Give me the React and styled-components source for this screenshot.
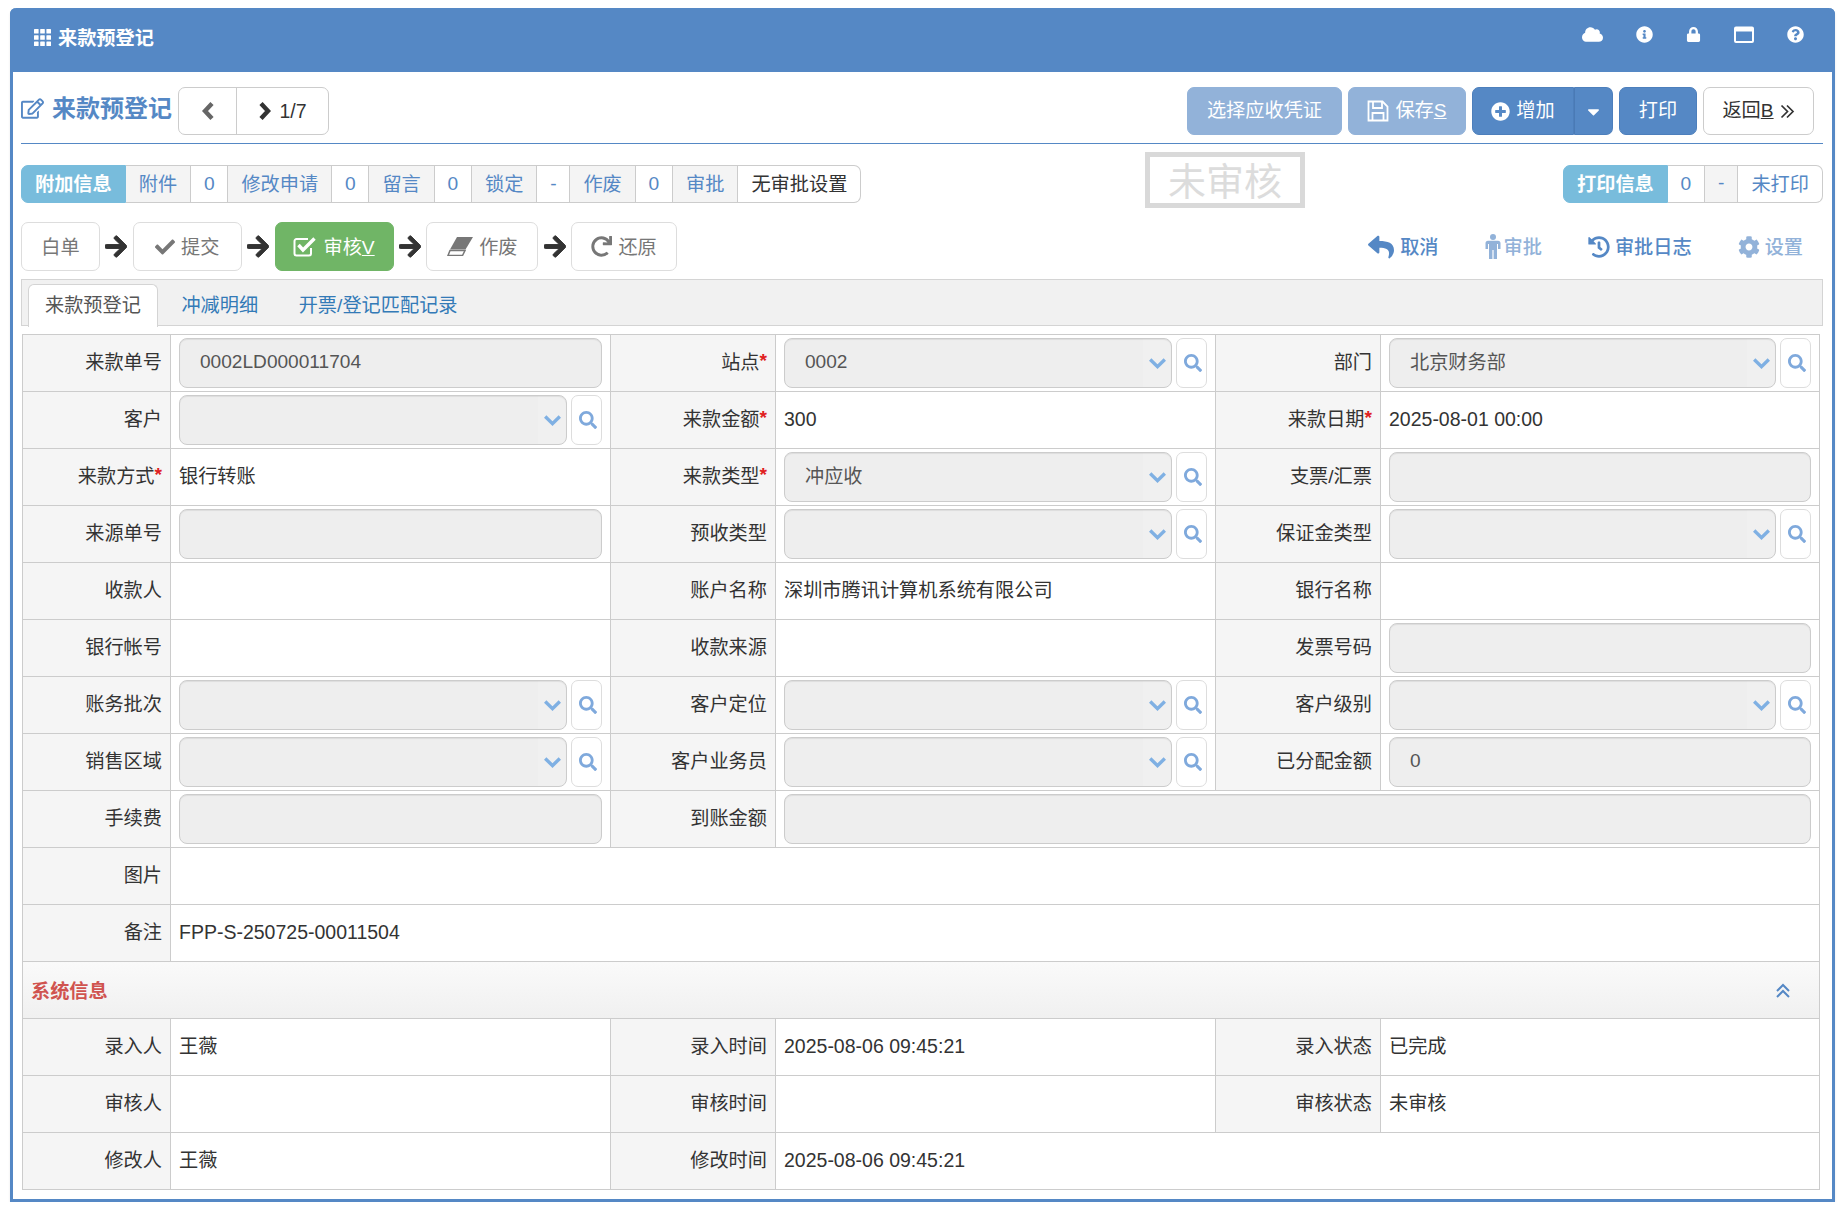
import React from "react";
import styled, { createGlobalStyle } from "styled-components";
import {
  FaCloud, FaInfoCircle, FaLock, FaQuestionCircle, FaRegEdit, FaPlusCircle, FaCaretDown, FaArrowRight,
  FaCheck, FaRedo, FaReply, FaHistory, FaCog, FaSearch,
} from "react-icons/fa";

const BLUE = "#5588c5";
const BLUE_LIGHT = "#92b2d9";

const GlobalStyle = createGlobalStyle`
  html, body {
    margin: 0;
    padding: 0;
    background: #fff;
  }
  body {
    font-family: "Liberation Sans", "Noto Sans CJK SC", sans-serif;
    font-size: 19.2px;
    color: #333;
  }
  * {
    box-sizing: border-box;
  }
`;

const Page = styled.div`
  padding: 8px 13px 0 10px;
`;

const Panel = styled.div`
  border: 3px solid ${BLUE};
  border-top: 0;
  border-radius: 6px 6px 0 0;
  height: 1194px;
  box-shadow: 0 2px 3px rgba(0, 0, 0, 0.08);
`;

const Header = styled.header`
  height: 64px;
  margin: 0 -3px;
  padding: 0 31px 6px 24px;
  background: ${BLUE};
  border-radius: 6px 6px 0 0;
  color: #fff;
  display: flex;
  align-items: center;
  justify-content: space-between;
`;

const HeaderTitle = styled.div`
  display: flex;
  align-items: center;
  gap: 7px;
  font-weight: bold;
`;

const HeaderIcons = styled.div`
  display: flex;
  align-items: center;
  gap: 33px;
  font-size: 17px;
  margin-bottom: 5px;
`;

const Txt = styled.span`
  display: inline-block;
  margin-bottom: 4px;
`;

const Body = styled.div`
  padding: 0 9px 0 8px;
`;

const TitleRow = styled.div`
  display: flex;
  align-items: center;
  justify-content: space-between;
  padding: 15px 9px 8px 0;
  border-bottom: 1px solid ${BLUE};
`;

const TitleLeft = styled.div`
  display: flex;
  align-items: center;
  gap: 6px;
`;

const PageTitle = styled.h1`
  margin: 0;
  padding-bottom: 5px;
  display: flex;
  align-items: center;
  gap: 8px;
  font-size: 24px;
  font-weight: bold;
  color: ${BLUE};
`;

const Pager = styled.div`
  display: flex;
  height: 48px;
  border: 1px solid #ccc;
  border-radius: 7px;
  font-size: 19.5px;
`;

const PagerCell = styled.div`
  display: flex;
  align-items: center;
  justify-content: center;
  gap: 7px;
  width: ${(p) => p.$width}px;
  color: ${(p) => p.$color || "#333"};
  & + & {
    border-left: 1px solid #ccc;
  }
`;

const ButtonBar = styled.div`
  display: flex;
  gap: 6px;
`;

const Button = styled.button`
  width: ${(p) => p.$width}px;
  height: 48px;
  padding: 0;
  display: flex;
  align-items: center;
  justify-content: center;
  gap: 6px;
  font: inherit;
  border-radius: 7px;
  border: 1px solid ${(p) => (p.$kind === "primary" ? "#4d7fbc" : p.$kind === "muted" ? BLUE_LIGHT : "#ccc")};
  background: ${(p) => (p.$kind === "primary" ? BLUE : p.$kind === "muted" ? BLUE_LIGHT : "#fff")};
  color: ${(p) => (p.$kind === "default" ? "#333" : "#fff")};
`;

const SplitButton = styled.div`
  display: flex;
  ${Button}:first-child {
    border-radius: 7px 0 0 7px;
  }
  ${Button}:last-child {
    border-radius: 0 7px 7px 0;
    border-left: 1px solid #4a7ab5;
  }
`;

const TagRow = styled.div`
  position: relative;
  display: flex;
  justify-content: space-between;
  margin-top: 21px;
`;

const TagGroup = styled.div`
  display: flex;
  height: 38px;
`;

const Tag = styled.div`
  display: flex;
  align-items: center;
  padding: 0 ${(p) => (p.$kind ? 13 : 12.8)}px ${(p) => (p.$kind ? 2 : 0)}px;
  border: 1px solid #ccc;
  border-left-width: 0;
  white-space: nowrap;
  background: ${(p) => (p.$kind === "label" ? "#f4f4f4" : "#fff")};
  color: ${(p) => (p.$kind === "plain" ? "#333" : BLUE)};

  &:first-child {
    border-left-width: 1px;
    border-radius: 7px 0 0 7px;
  }
  &:last-child {
    border-radius: 0 7px 7px 0;
  }
`;

const TagHead = styled(Tag)`
  padding: 0 13px 2px;
  background: #78bcdc;
  border-color: #78bcdc;
  color: #fff;
  font-weight: bold;
`;

const Stamp = styled.div`
  position: absolute;
  top: -13px;
  left: 1124px;
  width: 160px;
  height: 56px;
  border: 5px solid #d9d9d9;
  color: #dcdcdc;
  font-size: 38px;
  line-height: 50px;
  text-align: center;
`;

const FlowRow = styled.div`
  display: flex;
  justify-content: space-between;
  align-items: center;
  margin-top: 19px;
`;

const Flow = styled.div`
  display: flex;
  align-items: center;
`;

const FlowStep = styled.div`
  width: ${(p) => p.$width}px;
  height: 49px;
  display: flex;
  align-items: center;
  justify-content: center;
  gap: 6px;
  border-radius: 7px;
  border: 1px solid ${(p) => (p.$active ? "#70b566" : "#ddd")};
  background: ${(p) => (p.$active ? "#70b566" : "#fff")};
  color: ${(p) => (p.$active ? "#fff" : "#777")};

  ${Txt} {
    margin-bottom: 2px;
  }
`;

const FlowArrow = styled(FaArrowRight)`
  width: 22px;
  height: 25px;
  margin: 0 5.4px;
  color: #333;
  stroke: #333;
  stroke-width: 20px;
`;

const LinkBar = styled.div`
  display: flex;
  align-items: center;
  gap: 46px;
  padding-right: 20px;
`;

const ActionLink = styled.a`
  display: flex;
  align-items: center;
  gap: ${(p) => p.$gap ?? 5}px;
  font-weight: 500;
  color: ${(p) => (p.$muted ? BLUE_LIGHT : BLUE)};

  ${Txt} {
    margin-bottom: 2px;
  }
`;

const TabBar = styled.div`
  height: 47px;
  margin-top: 8px;
  padding: 4px 0 0 6px;
  display: flex;
  gap: 6.5px;
  background: #f1f1f1;
  border: 1px solid #d4d4d4;
`;

const Tab = styled.div`
  height: 43px;
  padding: 0 16px 4px;
  display: flex;
  align-items: center;
  color: ${(p) => (p.$active ? "#555" : "#337ab7")};
  background: ${(p) => (p.$active ? "#fff" : "transparent")};
  border: 1px solid ${(p) => (p.$active ? "#d4d4d4" : "transparent")};
  border-bottom: 0;
  border-radius: 6px 6px 0 0;
`;

const Grid = styled.div`
  display: grid;
  grid-template-columns: 148px 440px 165px 440px 165px 1fr;
  grid-auto-rows: 57px;
  margin: 8px 3px 0 1px;
  border-top: 1px solid #ccc;
  border-left: 1px solid #ccc;
`;

const Label = styled.div`
  display: flex;
  align-items: center;
  justify-content: flex-end;
  padding: 0 8px 4px 0;
  background: #f5f5f5;
  border-right: 1px solid #ccc;
  border-bottom: 1px solid #ccc;
`;

const Required = styled.span`
  color: #e02020;
  font-weight: bold;
`;

const Value = styled.div`
  grid-column: span ${(p) => p.$span || 1};
  display: flex;
  align-items: center;
  gap: 4px;
  padding: 0 8px;
  border-right: 1px solid #ccc;
  border-bottom: 1px solid #ccc;
`;

const Latin = styled.span`
  display: inline-block;
  margin-bottom: 2px;
  font-size: 19.5px;
`;

const Field = styled.div`
  flex: 1;
  height: 50px;
  padding: 0 ${(p) => (p.$select ? 5 : 20)}px 0 20px;
  display: flex;
  align-items: center;
  justify-content: space-between;
  background: ${(p) => (p.$select ? "linear-gradient(to right, #eee calc(100% - 28px), #f0f0f0 calc(100% - 28px))" : "#eee")};
  border: 1px solid #ccc;
  border-radius: 8px;
  box-shadow: inset 0 1px 1px rgba(0, 0, 0, 0.075);
  color: #555;

  ${Latin} {
    font-size: 19.1px;
  }
`;

const SearchButton = styled.div`
  width: 31px;
  height: 50px;
  padding-left: 3px;
  display: flex;
  align-items: center;
  justify-content: center;
  background: #fff;
  border: 1px solid #ddd;
  border-radius: 7px;
  color: #7fa9dc;
  font-size: 18px;
`;

const Section = styled.div`
  grid-column: span 6;
  padding: 0 28px 1px 8px;
  display: flex;
  align-items: center;
  justify-content: space-between;
  background: linear-gradient(#fafafa, #f0f0f0);
  border-right: 1px solid #ccc;
  border-bottom: 1px solid #ccc;
  color: #d0534f;
  font-weight: bold;
`;

// small drawings that the icon packages don't have in this shape

const GridIcon = () => (
  <svg width="17" height="17" viewBox="0 0 17 17" fill="currentColor">
    {[0, 6.2, 12.4].map((y) =>
      [0, 6.2, 12.4].map((x) => <rect key={`${x}-${y}`} x={x} y={y} width="4.6" height="4.6" rx="0.6" />)
    )}
  </svg>
);

const WindowIcon = () => (
  <svg width="20" height="17" viewBox="0 0 20 17" fill="none" stroke="currentColor" strokeWidth="2">
    <rect x="1" y="1.5" width="18" height="14.5" rx="1" />
    <path d="M1 3.5H19" strokeWidth="4" />
  </svg>
);

const SaveIcon = () => (
  <svg width="22" height="22" viewBox="0 0 22 22" fill="none" stroke="currentColor" strokeWidth="1.8">
    <path d="M1.5 1.5H15.5L20.5 6.5V20.5H1.5Z" />
    <path d="M6 1.5V8H15V1.5M5.5 20.5V13H16.5V20.5" />
  </svg>
);

const PagerChevron = ({ left }) => (
  <svg width="14" height="18" viewBox="0 0 14 18" fill="none" stroke="currentColor" strokeWidth="4.4">
    <path d={left ? "M11 1.5L4 9L11 16.5" : "M3 1.5L10 9L3 16.5"} />
  </svg>
);

const DoubleRight = () => (
  <svg width="15" height="15" viewBox="0 0 15 15" fill="none" stroke="currentColor" strokeWidth="1.7">
    <path d="M1.5 1.5L7.5 7.5L1.5 13.5M7 1.5L13 7.5L7 13.5" />
  </svg>
);

const DoubleUp = () => (
  <svg width="16" height="16" viewBox="0 0 16 16" fill="none" stroke={BLUE} strokeWidth="2" style={{ marginTop: 3 }}>
    <path d="M2 8L8 2L14 8M2 14L8 8L14 14" />
  </svg>
);

const SelectChevron = () => (
  <svg width="17" height="11" viewBox="0 0 17 11" fill="none" stroke="#7fb0e3" strokeWidth="3.4">
    <path d="M1.2 1.5L8.5 8.6L15.8 1.5" />
  </svg>
);

const CheckSquareIcon = () => (
  <svg width="24" height="21" viewBox="0 0 24 21" fill="none" stroke="currentColor">
    <path d="M18 12V17.5A2 2 0 0 1 16 19.5H3.5A2 2 0 0 1 1.5 17.5V5A2 2 0 0 1 3.5 3H15" strokeWidth="2" />
    <path d="M5.5 9L10 14L21.5 2.5" strokeWidth="3.4" />
  </svg>
);

const EraserIcon = () => (
  <svg width="26" height="19" viewBox="0 0 26 19" fill="currentColor">
    <path d="M10 0H26L18.5 12.5H3Z" />
    <path d="M3 13.5H18L15.5 18.5H1Z" fill="none" stroke="currentColor" strokeWidth="1.5" />
  </svg>
);

const MaleIcon = () => (
  <svg width="16" height="25" viewBox="0 0 16 25" fill="currentColor">
    <circle cx="8" cy="3" r="3" />
    <path d="M3 6.8H13A2.5 2.5 0 0 1 15.5 9.3V15H13V10H12V25H8.6V16H7.4V25H4V10H3V15H0.5V9.3A2.5 2.5 0 0 1 3 6.8Z" />
  </svg>
);

const text = (label, value = "", extra = {}) => ({ label, value, kind: "text", ...extra });
const input = (label, value = "", extra = {}) => ({ label, value, kind: "input", ...extra });
const select = (label, value = "", extra = {}) => ({ label, value, kind: "select", ...extra });

const formCells = [
  input("来款单号", "0002LD000011704"),
  select("站点", "0002", { required: true }),
  select("部门", "北京财务部"),
  select("客户"),
  text("来款金额", "300", { required: true }),
  text("来款日期", "2025-08-01 00:00", { required: true }),
  text("来款方式", "银行转账", { required: true }),
  select("来款类型", "冲应收", { required: true }),
  input("支票/汇票"),
  input("来源单号"),
  select("预收类型"),
  select("保证金类型"),
  text("收款人"),
  text("账户名称", "深圳市腾讯计算机系统有限公司"),
  text("银行名称"),
  text("银行帐号"),
  text("收款来源"),
  input("发票号码"),
  select("账务批次"),
  select("客户定位"),
  select("客户级别"),
  select("销售区域"),
  select("客户业务员"),
  input("已分配金额", "0"),
  input("手续费"),
  input("到账金额", "", { span: 3 }),
  text("图片", "", { span: 5 }),
  text("备注", "FPP-S-250725-00011504", { span: 5 }),
];

const systemCells = [
  text("录入人", "王薇"),
  text("录入时间", "2025-08-06 09:45:21"),
  text("录入状态", "已完成"),
  text("审核人"),
  text("审核时间"),
  text("审核状态", "未审核"),
  text("修改人", "王薇"),
  text("修改时间", "2025-08-06 09:45:21", { span: 3 }),
];

// latin values stay on the line, chinese ones get lifted
const CellText = ({ value }) => {
  if (!value) return <span />;
  return /^[\x00-\x7f]+$/.test(value) ? <Latin>{value}</Latin> : <Txt>{value}</Txt>;
};

const FormCell = ({ cell }) => (
  <>
    <Label>
      {cell.label}
      {cell.required && <Required>*</Required>}
    </Label>
    <Value $span={cell.span}>
      {cell.kind === "text" && <CellText value={cell.value} />}
      {cell.kind === "input" && (
        <Field>
          <CellText value={cell.value} />
        </Field>
      )}
      {cell.kind === "select" && (
        <>
          <Field $select>
            <CellText value={cell.value} />
            <SelectChevron />
          </Field>
          <SearchButton>
            <FaSearch />
          </SearchButton>
        </>
      )}
    </Value>
  </>
);

export default function App() {
  return (
    <Page>
      <GlobalStyle />
      <Panel>
        <Header>
          <HeaderTitle>
            <GridIcon />
            来款预登记
          </HeaderTitle>
          <HeaderIcons>
            <FaCloud size={21} />
            <FaInfoCircle />
            <FaLock size={15} />
            <WindowIcon />
            <FaQuestionCircle />
          </HeaderIcons>
        </Header>
        <Body>
          <TitleRow>
            <TitleLeft>
              <PageTitle>
                <FaRegEdit size={23} />
                <Txt>来款预登记</Txt>
              </PageTitle>
              <Pager>
                <PagerCell $width={57} $color="#666">
                  <PagerChevron left />
                </PagerCell>
                <PagerCell $width={92}>
                  <PagerChevron />
                  1/7
                </PagerCell>
              </Pager>
            </TitleLeft>
            <ButtonBar>
              <Button $kind="muted" $width={155}>
                <Txt>选择应收凭证</Txt>
              </Button>
              <Button $kind="muted" $width={118}>
                <SaveIcon />
                <Txt>
                  保存<u>S</u>
                </Txt>
              </Button>
              <SplitButton>
                <Button $kind="primary" $width={102}>
                  <FaPlusCircle size={19} />
                  <Txt>增加</Txt>
                </Button>
                <Button $kind="primary" $width={39}>
                  <FaCaretDown size={19} />
                </Button>
              </SplitButton>
              <Button $kind="primary" $width={78}>
                <Txt>打印</Txt>
              </Button>
              <Button $kind="default" $width={111}>
                <Txt>
                  返回<u>B</u>
                </Txt>
                <DoubleRight />
              </Button>
            </ButtonBar>
          </TitleRow>

          <TagRow>
            <TagGroup>
              <TagHead>附加信息</TagHead>
              <Tag $kind="label">附件</Tag>
              <Tag>0</Tag>
              <Tag $kind="label">修改申请</Tag>
              <Tag>0</Tag>
              <Tag $kind="label">留言</Tag>
              <Tag>0</Tag>
              <Tag $kind="label">锁定</Tag>
              <Tag>-</Tag>
              <Tag $kind="label">作废</Tag>
              <Tag>0</Tag>
              <Tag $kind="label">审批</Tag>
              <Tag $kind="plain">无审批设置</Tag>
            </TagGroup>
            <Stamp>未审核</Stamp>
            <TagGroup>
              <TagHead>打印信息</TagHead>
              <Tag>0</Tag>
              <Tag $kind="label">-</Tag>
              <Tag $kind="text">未打印</Tag>
            </TagGroup>
          </TagRow>

          <FlowRow>
            <Flow>
              <FlowStep $width={79}>
                <Txt>白单</Txt>
              </FlowStep>
              <FlowArrow />
              <FlowStep $width={109}>
                <FaCheck size={20} />
                <Txt>提交</Txt>
              </FlowStep>
              <FlowArrow />
              <FlowStep $active $width={119}>
                <CheckSquareIcon />
                <Txt>
                  审核<u>V</u>
                </Txt>
              </FlowStep>
              <FlowArrow />
              <FlowStep $width={112}>
                <EraserIcon />
                <Txt>作废</Txt>
              </FlowStep>
              <FlowArrow />
              <FlowStep $width={106}>
                <FaRedo size={21} />
                <Txt>还原</Txt>
              </FlowStep>
            </Flow>
            <LinkBar>
              <ActionLink $gap={6}>
                <FaReply size={26} />
                <Txt>取消</Txt>
              </ActionLink>
              <ActionLink $muted $gap={3}>
                <MaleIcon />
                <Txt>审批</Txt>
              </ActionLink>
              <ActionLink>
                <FaHistory size={22} />
                <Txt>审批日志</Txt>
              </ActionLink>
              <ActionLink $muted>
                <FaCog size={22} />
                <Txt>设置</Txt>
              </ActionLink>
            </LinkBar>
          </FlowRow>

          <TabBar>
            <Tab $active>来款预登记</Tab>
            <Tab>冲减明细</Tab>
            <Tab>开票/登记匹配记录</Tab>
          </TabBar>

          <Grid>
            {formCells.map((cell) => (
              <FormCell key={cell.label} cell={cell} />
            ))}
            <Section>
              系统信息
              <DoubleUp />
            </Section>
            {systemCells.map((cell) => (
              <FormCell key={cell.label} cell={cell} />
            ))}
          </Grid>
        </Body>
      </Panel>
    </Page>
  );
}
